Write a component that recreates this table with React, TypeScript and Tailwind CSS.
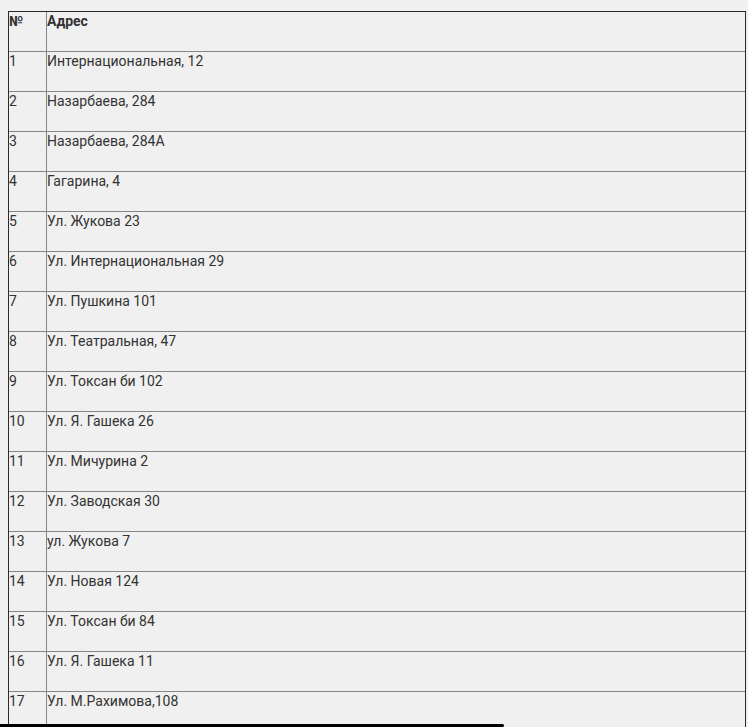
const ROWS: string[] = [
  "Интернациональная, 12",
  "Назарбаева, 284",
  "Назарбаева, 284А",
  "Гагарина, 4",
  "Ул. Жукова 23",
  "Ул. Интернациональная 29",
  "Ул. Пушкина 101",
  "Ул. Театральная, 47",
  "Ул. Токсан би 102",
  "Ул. Я. Гашека 26",
  "Ул. Мичурина 2",
  "Ул. Заводская 30",
  "ул. Жукова 7",
  "Ул. Новая 124",
  "Ул. Токсан би 84",
  "Ул. Я. Гашека 11",
  "Ул. М.Рахимова,108",
];

export default function App() {
  return (
    <div
      className="relative h-[727px] w-[748px] overflow-hidden bg-[#f0f0f0] pt-[11px] pl-[8px] text-[14px] leading-[18px] text-[#333333]"
      style={{ fontFamily: "Roboto, 'Noto Sans', sans-serif" }}
    >
      <table className="w-[738px] table-fixed border-separate border-spacing-0 border border-[#2a2a2a]">
        <colgroup>
          <col className="w-[37px]" />
          <col />
        </colgroup>
        <thead>
          <tr>
            <th className="h-[40px] border-b border-[#858585] p-0 text-left align-top font-bold">№</th>
            <th className="h-[40px] border-b border-l border-[#858585] p-0 text-left align-top font-bold">Адрес</th>
          </tr>
        </thead>
        <tbody>
          {ROWS.map((addr, i) => (
            <tr key={i}>
              <td className="h-[40px] border-b border-[#858585] p-0 align-top">{i + 1}</td>
              <td className="h-[40px] border-b border-l border-[#858585] p-0 align-top">{addr}</td>
            </tr>
          ))}
        </tbody>
      </table>

      {/* scrollbar thumb at the bottom edge */}
      <div className="absolute bottom-0 left-0 h-[3px] w-[504px] rounded-r-sm bg-black" />
    </div>
  );
}
